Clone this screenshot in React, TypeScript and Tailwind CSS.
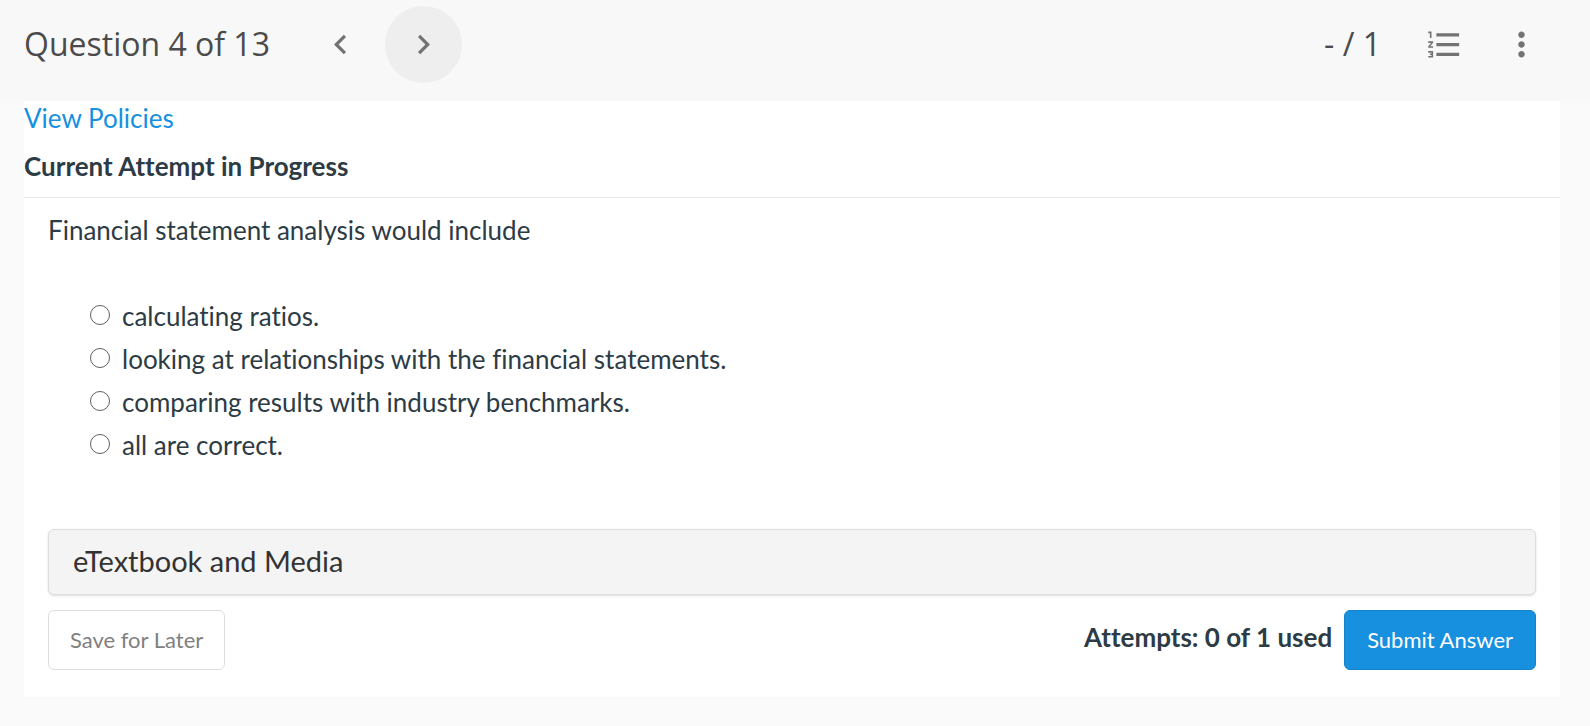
import { useState } from "react";
import {
  MdChevronLeft,
  MdChevronRight,
  MdFormatListNumbered,
  MdMoreVert,
} from "react-icons/md";

const options = [
  "calculating ratios.",
  "looking at relationships with the financial statements.",
  "comparing results with industry benchmarks.",
  "all are correct.",
];

const iconButton =
  "flex size-[77px] items-center justify-center rounded-full text-[#737373]";

export default function App() {
  const [answer, setAnswer] = useState("");

  return (
    <div className="min-h-screen bg-[#fafafa] pb-7 font-['Lato',sans-serif] text-[26px] leading-[43px] text-[#2d3b45] [font-variant-ligatures:none]">
      <header className="flex h-[101px] items-start justify-between bg-[#f8f8f8] pt-1.5 pr-[30px] pl-6 font-['Open_Sans',sans-serif] text-[32px] leading-[76px] text-[#4b4b4b]">
        <div className="flex">
          <h1 className="mr-8">Question 4 of 13</h1>
          <nav className="flex gap-1.5">
            <button className={iconButton} aria-label="Previous question">
              <MdChevronLeft size={39} />
            </button>
            <button
              className={`${iconButton} bg-[#eeeeee]`}
              aria-label="Next question"
            >
              <MdChevronRight size={39} />
            </button>
          </nav>
        </div>
        <div className="flex">
          <span className="mr-[25px]">- / 1</span>
          <button className={iconButton} aria-label="Question list">
            <MdFormatListNumbered size={39} />
          </button>
          <button className={iconButton} aria-label="More options">
            <MdMoreVert size={39} />
          </button>
        </div>
      </header>

      <main className="mr-[30px] ml-6 bg-white pb-[27px]">
        <a href="#policies" className="block leading-[34px] text-[#1790df]">
          View Policies
        </a>
        <h2 className="border-b border-[#ebebeb] py-2.5 leading-[42px] font-bold">
          Current Attempt in Progress
        </h2>

        <div className="px-6">
          <p className="pt-[11px]">Financial statement analysis would include</p>

          <fieldset className="mt-[43px] ml-[42px]" aria-label="Answer choices">
            {options.map((option) => (
              <label key={option} className="flex items-start">
                <input
                  type="radio"
                  name="answer"
                  value={option}
                  checked={answer === option}
                  onChange={(e) => setAnswer(e.target.value)}
                  className="mt-2.5 mr-3 size-5 appearance-none rounded-full border border-[#5f5f5f] bg-white checked:border-[6px] checked:border-[#1790df]"
                />
                {option}
              </label>
            ))}
          </fieldset>

          <button className="mt-[62px] block h-[66px] w-full rounded-md border border-[#dddddd] bg-[#f4f4f4] px-6 pb-1 text-left text-[29px] text-[#333333] shadow-sm">
            eTextbook and Media
          </button>

          <div className="mt-[15px] flex items-start justify-between">
            <button className="h-[60px] rounded-md border border-[#dddddd] px-[21px] pb-0.5 text-[22px] text-[#808080]">
              Save for Later
            </button>
            <div className="flex items-start gap-3">
              <strong className="pt-1.5 font-bold">
                Attempts: 0 of 1 used
              </strong>
              <button className="h-[60px] rounded-md border border-[#1583cb] bg-[#1790df] px-[22px] pb-0.5 text-[22px] text-white">
                Submit Answer
              </button>
            </div>
          </div>
        </div>
      </main>
    </div>
  );
}
